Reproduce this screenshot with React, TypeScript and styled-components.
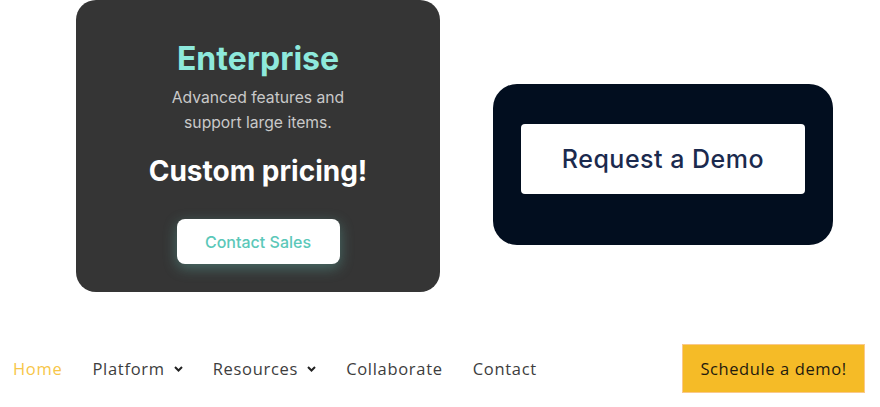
import { createGlobalStyle, styled } from "styled-components";

const GlobalStyle = createGlobalStyle`
  html, body {
    margin: 0;
    padding: 0;
    background: #ffffff;
  }
  body {
    font-family: Inter, "Liberation Sans", sans-serif;
  }
`;

const Page = styled.div`
  width: 880px;
  height: 407px;
  overflow: hidden;
`;

const Cards = styled.section`
  display: flex;
  align-items: flex-start;
  gap: 53px;
  padding-left: 76px;
`;

const PlanCard = styled.div`
  width: 364px;
  height: 292px;
  box-sizing: border-box;
  padding-top: 40px;
  background: #353535;
  border-radius: 20px;
  display: flex;
  flex-direction: column;
  align-items: center;
  text-align: center;
`;

const PlanTitle = styled.h2`
  margin: 0;
  font-size: 32px;
  line-height: 38px;
  font-weight: 700;
  color: #8ee9dc;
`;

const PlanText = styled.p`
  margin: 7px 0 0;
  font-size: 15.7px;
  line-height: 25px;
  color: #c9c9c9;
`;

const Price = styled.h3`
  margin: 19px 0 0;
  font-size: 28px;
  line-height: 34px;
  font-weight: 700;
  color: #ffffff;
`;

const SalesButton = styled.button`
  margin-top: 31px;
  width: 163px;
  height: 45px;
  border: none;
  border-radius: 8px;
  background: #ffffff;
  color: #5bc8b9;
  font-family: Inter, "Liberation Sans", sans-serif;
  font-size: 16px;
  font-weight: 500;
  box-shadow: 0 4px 14px rgba(110, 215, 200, 0.35);
  cursor: pointer;
`;

const DemoCard = styled.div`
  margin-top: 84px;
  width: 340px;
  height: 161px;
  box-sizing: border-box;
  padding: 40px 28px 0;
  background: #020e1f;
  border-radius: 24px;
`;

const DemoButton = styled.button`
  width: 284px;
  height: 70px;
  border: none;
  border-radius: 4px;
  background: #ffffff;
  color: #1b2a4e;
  font-family: Inter, "Liberation Sans", sans-serif;
  font-size: 25px;
  font-weight: 500;
  letter-spacing: 0.5px;
  cursor: pointer;
`;

const Nav = styled.nav`
  margin-top: 52px;
  display: flex;
  align-items: center;
  padding: 0 15px 0 13px;
  font-family: "Open Sans", "Liberation Sans", sans-serif;
`;

const NavList = styled.ul`
  display: flex;
  align-items: center;
  gap: 30px;
  margin: 0;
  padding: 0;
  list-style: none;
`;

const NavItem = styled.li<{ $active?: boolean }>`
  display: flex;
  align-items: center;
  gap: 9px;
  font-size: 16.5px;
  line-height: 24px;
  letter-spacing: 0.7px;
  color: ${(p) => (p.$active ? "#f7c648" : "#3d3d3d")};
`;

const Chevron = styled.svg`
  width: 9px;
  height: 6px;
  margin-top: 1px;
`;

const ScheduleButton = styled.button`
  margin-left: auto;
  width: 183px;
  height: 49px;
  border: 1px solid #fac98a;
  background: #f5bb27;
  color: #1f1a0e;
  font-family: "Open Sans", "Liberation Sans", sans-serif;
  font-size: 16.5px;
  letter-spacing: 0.6px;
  cursor: pointer;
`;

const navItems = [
  { label: "Home", active: true },
  { label: "Platform", menu: true },
  { label: "Resources", menu: true },
  { label: "Collaborate" },
  { label: "Contact" },
];

export default function App() {
  return (
    <Page>
      <GlobalStyle />
      <Cards>
        <PlanCard>
          <PlanTitle>Enterprise</PlanTitle>
          <PlanText>
            Advanced features and
            <br />
            support large items.
          </PlanText>
          <Price>Custom pricing!</Price>
          <SalesButton>Contact Sales</SalesButton>
        </PlanCard>
        <DemoCard>
          <DemoButton>Request a Demo</DemoButton>
        </DemoCard>
      </Cards>
      <Nav>
        <NavList>
          {navItems.map((item) => (
            <NavItem key={item.label} $active={item.active}>
              {item.label}
              {item.menu && (
                <Chevron viewBox="0 0 9 6">
                  <path
                    d="M1 1l3.5 3.5L8 1"
                    fill="none"
                    stroke="#222"
                    strokeWidth="2"
                  />
                </Chevron>
              )}
            </NavItem>
          ))}
        </NavList>
        <ScheduleButton>Schedule a demo!</ScheduleButton>
      </Nav>
    </Page>
  );
}
